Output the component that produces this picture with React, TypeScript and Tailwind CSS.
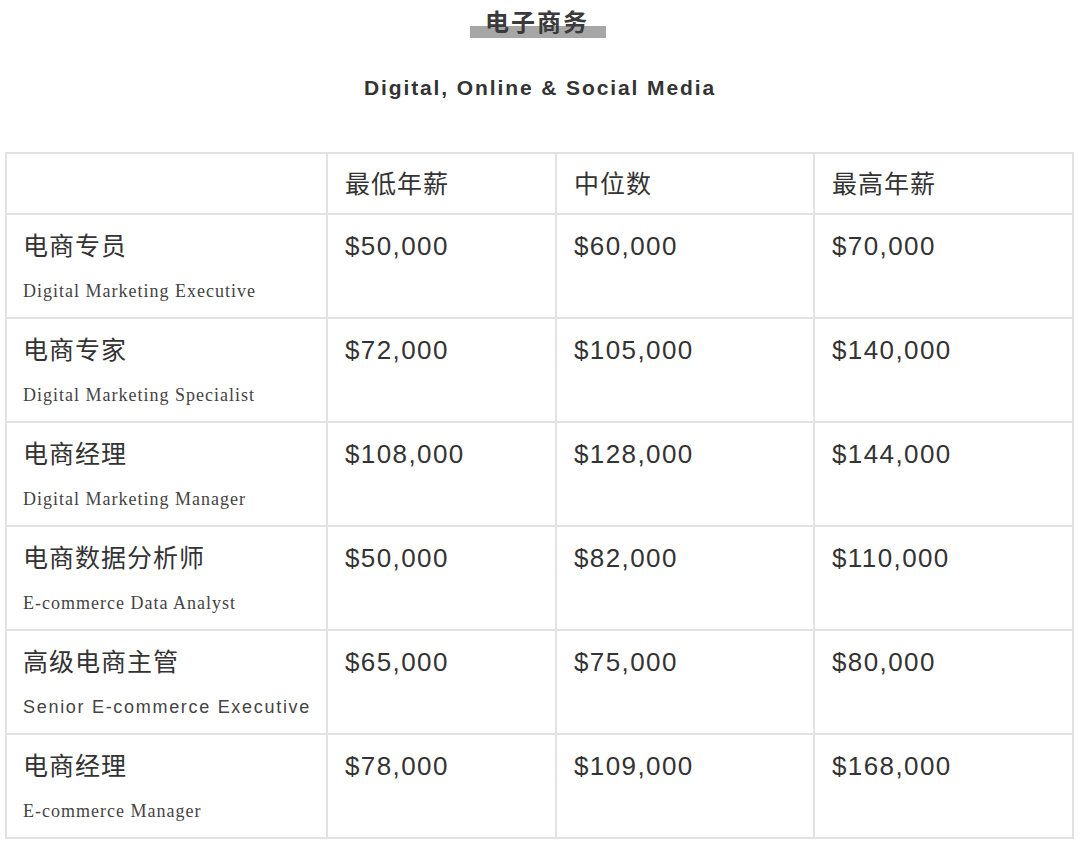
const rows = [
  { zh: "电商专员", en: "Digital Marketing Executive", low: "$50,000", mid: "$60,000", high: "$70,000" },
  { zh: "电商专家", en: "Digital Marketing Specialist", low: "$72,000", mid: "$105,000", high: "$140,000" },
  { zh: "电商经理", en: "Digital Marketing Manager", low: "$108,000", mid: "$128,000", high: "$144,000" },
  { zh: "电商数据分析师", en: "E-commerce Data Analyst", low: "$50,000", mid: "$82,000", high: "$110,000" },
  { zh: "高级电商主管", en: "Senior E-commerce Executive", low: "$65,000", mid: "$75,000", high: "$80,000", sans: true },
  { zh: "电商经理", en: "E-commerce Manager", low: "$78,000", mid: "$109,000", high: "$168,000" },
]

const sans = "font-['Helvetica','Liberation_Sans','Noto_Sans_CJK_SC',sans-serif]"

export default function App() {
  return (
    <div className={`w-[1080px] h-[847px] bg-white text-[#333] ${sans} overflow-hidden`}>
      <div className="flex flex-col items-center pt-[8px]">
        <div className="relative -ml-[4px] pl-[15px] pr-[17px]">
          <span className="absolute left-0 right-0 top-[18px] h-[12px] bg-[#a6a6a6]" />
          <h1 className="relative text-[24px] leading-[30px] font-bold tracking-[2px] text-[#3a3a3a]">电子商务</h1>
        </div>
        <h2 className="mt-[36px] text-[21px] leading-[28px] font-bold tracking-[1.9px] text-[#333]">
          Digital, Online &amp; Social Media
        </h2>
      </div>

      <table className="mt-[50px] ml-[5px] w-[1067px] border-collapse table-fixed">
        <colgroup>
          <col className="w-[321px]" />
          <col className="w-[229px]" />
          <col className="w-[258px]" />
          <col className="w-[259px]" />
        </colgroup>
        <thead>
          <tr className="h-[61px]">
            <th className="border-2 border-[#e2e2e2]" />
            {["最低年薪", "中位数", "最高年薪"].map((h) => (
              <th key={h} className="border-2 border-[#e2e2e2] px-[17px] text-left text-[25px] font-normal leading-[30px] tracking-[1px]">
                {h}
              </th>
            ))}
          </tr>
        </thead>
        <tbody>
          {rows.map((r, i) => (
            <tr key={i} className="h-[104px]">
              <td className="border-2 border-[#e2e2e2] pl-[16px] pr-[4px] pt-[16px] pb-[10px] align-top">
                <div className="text-[25px] leading-[30px] tracking-[1px]">{r.zh}</div>
                {r.sans ? (
                  <div className="mt-[19px] whitespace-nowrap text-[18px] leading-[22px] tracking-[1.7px] text-[#444]">{r.en}</div>
                ) : (
                  <div className="mt-[19px] whitespace-nowrap font-['Times','Liberation_Serif',serif] text-[18px] leading-[22px] tracking-[1px] text-[#444]">
                    {r.en}
                  </div>
                )}
              </td>
              {[r.low, r.mid, r.high].map((v, j) => (
                <td key={j} className="border-2 border-[#e2e2e2] px-[17px] pt-[16px] align-top text-[26px] leading-[30px] tracking-[1.4px]">
                  {v}
                </td>
              ))}
            </tr>
          ))}
        </tbody>
      </table>
    </div>
  )
}
